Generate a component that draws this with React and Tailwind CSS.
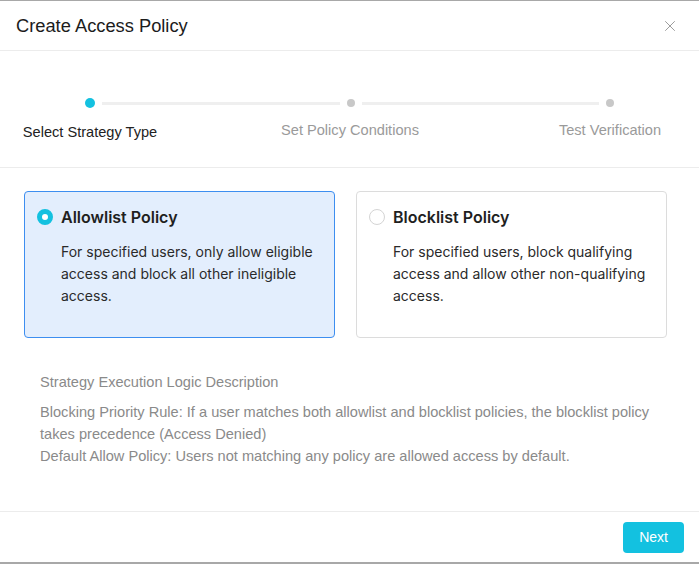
import { X } from "lucide-react";

const steps = [
  { label: "Select Strategy Type", active: true },
  { label: "Set Policy Conditions", active: false },
  { label: "Test Verification", active: false },
];

const policies = [
  {
    id: "allow",
    title: "Allowlist Policy",
    text: "For specified users, only allow eligible access and block all other ineligible access.",
  },
  {
    id: "block",
    title: "Blocklist Policy",
    text: "For specified users, block qualifying access and allow other non-qualifying access.",
  },
];

function Steps() {
  return (
    <div className="pt-[47px] pb-[25px] border-b border-[#ececec]">
      <div className="flex items-center pl-[85px] pr-[85px] h-[10px]">
        <span className="w-[10px] h-[10px] rounded-full bg-[#13c1e0]" />
        <span className="flex-1 h-[3px] mx-[7px] bg-[#efefef]" />
        <span className="w-[8px] h-[8px] rounded-full bg-[#c8c8c8]" />
        <span className="flex-1 h-[3px] mx-[7px] bg-[#efefef]" />
        <span className="w-[8px] h-[8px] rounded-full bg-[#c8c8c8]" />
      </div>
      <div className="flex gap-[80px] mt-[12px]">
        {steps.map((s) => (
          <div
            key={s.label}
            className={`w-[180px] shrink-0 text-center text-[14.6px] leading-[20px] whitespace-nowrap ${
              s.active ? "text-[#222] mt-[2px]" : "text-[#9a9a9a]"
            }`}
          >
            {s.label}
          </div>
        ))}
      </div>
    </div>
  );
}

function PolicyCard({ policy, selected }) {
  return (
    <div
      className={`flex-1 h-[147px] rounded-[4px] border pl-[12px] pr-[16px] pt-[15px] flex gap-[8px] ${
        selected
          ? "bg-[#e3eefd] border-[#3d8ef0]"
          : "bg-white border-[#dcdcdc]"
      }`}
      style={{ fontFamily: "Inter, 'Noto Sans', sans-serif" }}
    >
      {selected ? (
        <span className="mt-[2px] w-[16px] h-[16px] shrink-0 rounded-full border-[5px] border-[#13c1e0] bg-white" />
      ) : (
        <span className="mt-[2px] w-[16px] h-[16px] shrink-0 rounded-full border border-[#d4d4d4] bg-white" />
      )}
      <div>
        <div className="text-[16px] leading-[20px] font-semibold text-[#1f1f1f]">
          {policy.title}
        </div>
        <p className="mt-[14px] text-[14px] leading-[22px] text-[#2a2a2a]">
          {policy.text}
        </p>
      </div>
    </div>
  );
}

export default function App() {
  return (
    <div
      className="w-[699px] h-[564px] bg-white border-t border-b-2 border-[#a8a8a8] flex flex-col overflow-hidden"
      style={{ fontFamily: "'Liberation Sans', Arial, sans-serif" }}
    >
      <div className="h-[50px] shrink-0 flex items-center justify-between pl-[16px] pr-[20px] border-b border-[#ececec]">
        <h2 className="text-[18.3px] text-[#1c1c1c] font-normal">
          Create Access Policy
        </h2>
        <X size={18} strokeWidth={1.3} className="text-[#999]" />
      </div>

      <Steps />

      <div className="flex gap-[21px] pl-[24px] pr-[32px] pt-[23px]">
        {policies.map((p) => (
          <PolicyCard key={p.id} policy={p} selected={p.id === "allow"} />
        ))}
      </div>

      <div className="pl-[40px] pr-[40px] pt-[34px] text-[14.6px] text-[#8a8a8a]">
        <div className="leading-[20px]">Strategy Execution Logic Description</div>
        <p className="mt-[9px] leading-[22px]">
          Blocking Priority Rule: If a user matches both allowlist and blocklist
          policies, the blocklist policy takes precedence (Access Denied)
        </p>
        <p className="leading-[22px]">
          Default Allow Policy: Users not matching any policy are allowed access
          by default.
        </p>
      </div>

      <div className="mt-auto h-[51px] border-t border-[#ececec] flex items-center justify-end pr-[15px]">
        <button className="h-[31px] px-[16px] rounded-[4px] bg-[#13c1e0] text-white text-[14px] font-medium">
          Next
        </button>
      </div>
    </div>
  );
}
